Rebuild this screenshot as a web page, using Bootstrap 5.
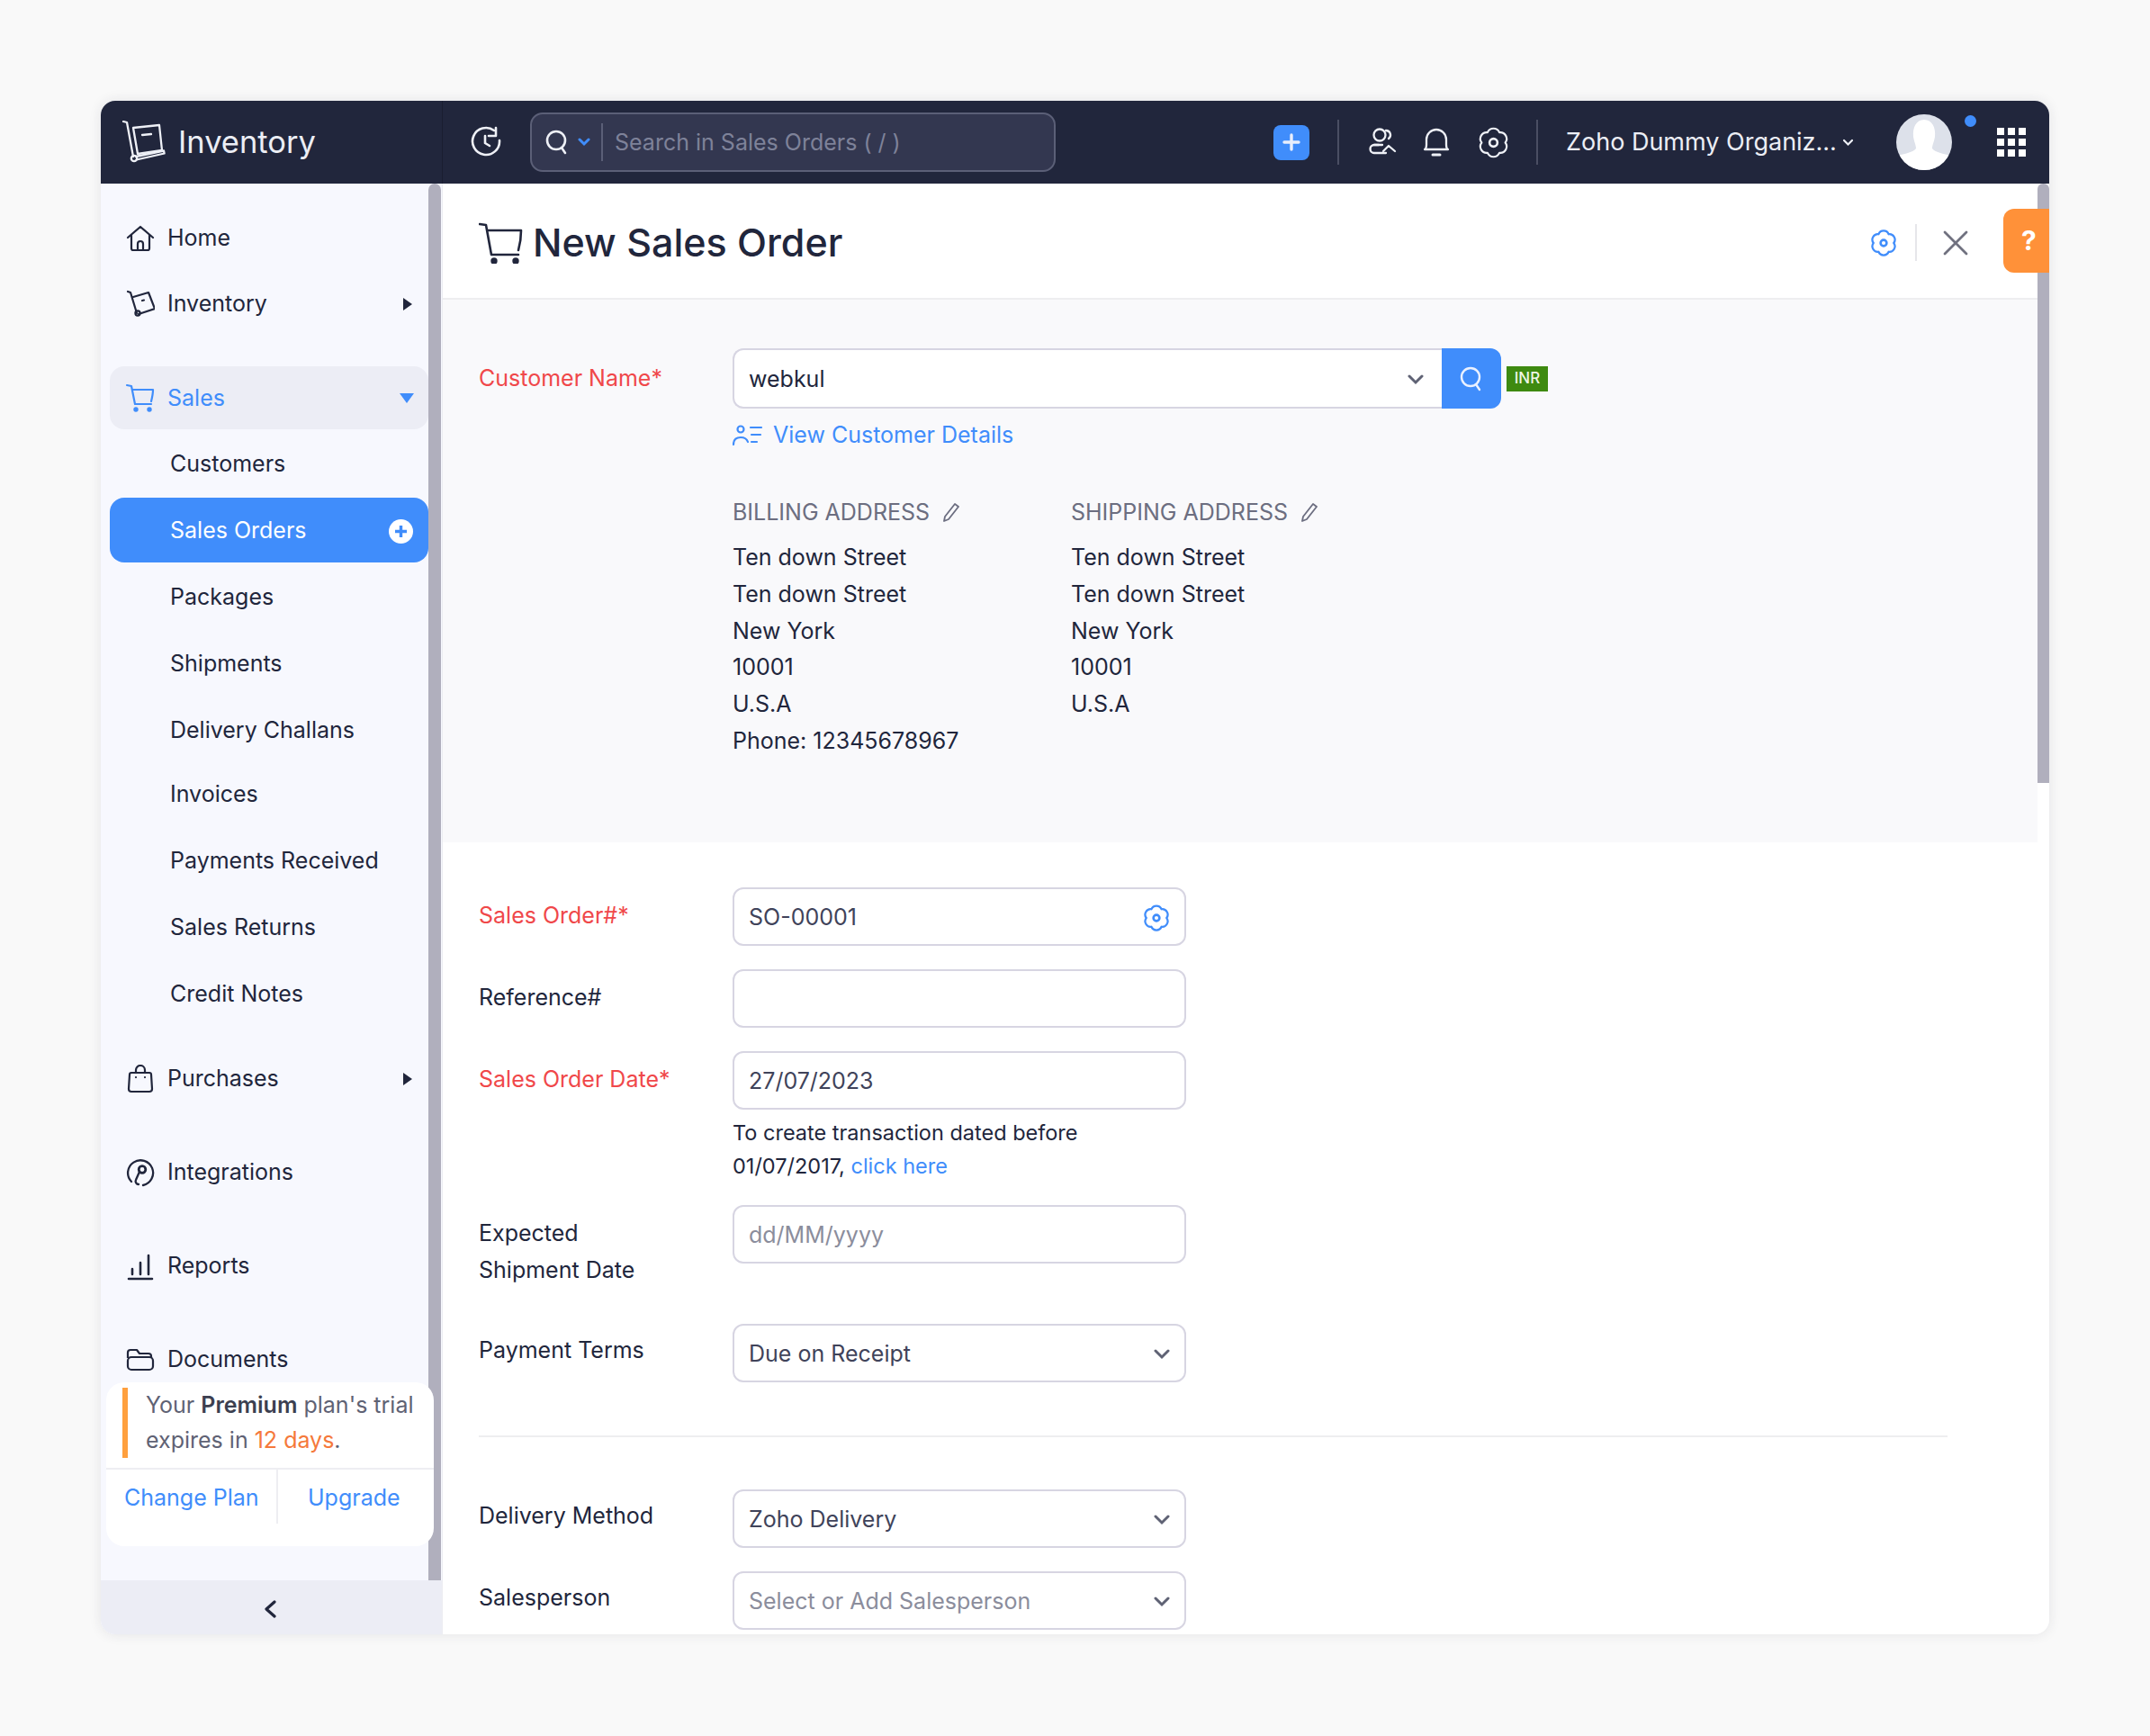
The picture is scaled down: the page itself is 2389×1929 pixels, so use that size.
<!DOCTYPE html>
<html lang="en"><head><meta charset="utf-8"><title>New Sales Order</title>
<link href="https://cdn.jsdelivr.net/npm/bootstrap@5.3.0/dist/css/bootstrap.min.css" rel="stylesheet">
<style>
html,body{height:100%}
body{background:#f9f9f9;font-family:Inter,"Liberation Sans",sans-serif;font-size:25px;color:#21263c;padding:112px 112px 113px;overflow:hidden}
svg{display:block;flex:none}
.win{height:1704px;border-radius:16px;overflow:hidden;box-shadow:0 0 14px rgba(40,40,60,.1);position:relative;background:#fff}
.topbar{height:92px;background:#21263c;color:#eceef5}
.brandcell{width:380px;height:100%;padding-left:24px;border-right:1px solid #1a1e30;font-size:34.500px;gap:14px}
.histic{margin-left:30px}
.srch{width:584px;height:66px;margin-left:31px;background:#333750;border:2px solid #5b5f77;border-radius:14px;color:#7e8299;font-size:25px;padding-left:15px}
.srch-chev{margin-left:10px}
.srch-div{width:2px;height:42px;background:#5b5f77;margin:0 13px 0 12px}
.srch-txt{padding-top:2px}
.vdiv{width:2px;height:50px;background:#4a4e63}
.plusbtn{width:40px;height:39px;background:#408dfb;border-radius:8px;margin-left:242px}
.gapl{margin-left:30px}
.gapb{margin-left:28px}
.vd1{margin:0 32px 0 31px}
.org{font-size:27px;margin:0 6px 0 31px;white-space:nowrap}
.avat{width:62px;height:62px;border-radius:50%;background:#dde1ea;overflow:hidden;margin-left:47px;position:relative}
.ping{width:13px;height:13px;border-radius:50%;background:#408dfb;margin:-48px 0 0 14px}
.grid9{display:grid;grid-template-columns:repeat(3,8px);grid-auto-rows:8px;gap:4px;margin-left:23px}
.grid9 i{background:#fff}
.bodyrow{height:1612px}
.side{width:380px;height:100%;background:#f7f8fe;position:relative;overflow:hidden;border-right:1px solid #ecedf2}
.side-bar{position:absolute;right:1px;top:0;width:14px;bottom:60px;background:#b0afbd;border-radius:7px 7px 0 0}
.menu{padding:26px 0 0 10px;width:364px}
.mi{height:70px;padding:0 18px;gap:14px;border-radius:16px;color:#21263c}
.mi .arrow{margin-left:auto}
.mi-gap{margin-bottom:34px}
.mi-inv{margin:3px 0 34px}
.mi-sales{background:#ecedf5;color:#408dfb;margin-bottom:1px}
.mi-sales span{padding-top:2px}
.mi-sales .arrow{margin-right:-2px}
.si{height:74px;padding:2px 17px 0 67px;color:#21263c}
.si-on{background:#408dfb;color:#fff;border-radius:16px;height:72px;margin:1px 0}
.si-deliv{margin-bottom:-3px}
.si-last{margin-bottom:23px}
.tri-r{width:0;height:0;border-top:7px solid transparent;border-bottom:7px solid transparent;border-left:10px solid #21263c}
.tri-d{width:0;height:0;border-left:8px solid transparent;border-right:8px solid transparent;border-top:11px solid #408dfb}
.trial{position:absolute;left:6px;width:364px;top:1332px;height:182px;background:#fff;border-radius:20px;color:#5f6274;font-size:25px;line-height:39px}
.trial-msg{padding:6px 6px 0 44px;height:95px;position:relative;white-space:nowrap}
.trial-msg::before{content:"";position:absolute;left:18px;top:6px;width:6px;height:78px;background:#ffa03e}
.trial-msg b{font-weight:600;color:#3c3f50}
.trial-msg em{font-style:normal;color:#f5793b}
.trial-act{border-top:2px solid #eeeef2;height:62px}
.trial-act a{text-decoration:none;color:#408dfb;padding-top:12px}
.act1{padding-left:20px;border-right:2px solid #eeeef2;width:191px;flex:none}
.act2{padding-left:33px;flex:1}
.collapser{position:absolute;left:0;right:0;bottom:0;height:60px;background:#ecedf5;padding:4px 4px 0 0}
.main{height:100%;overflow:hidden;position:relative}
.mainhead{height:129px;border-bottom:2px solid #eeeef0;padding:4px 0 0 40px;gap:10px;background:#fff}
.mainhead h1{font-size:43px;font-weight:500;margin:0;color:#21263c}
.headtools{margin-right:89px}
.hdiv{width:2px;height:41px;background:#e6e6ea;margin:0 28px 0 20px}
.help{position:absolute;top:28px;right:0;width:51px;height:71px;background:#ff9139;border-radius:12px 0 0 12px;color:#fff;font-weight:700;font-size:30px;z-index:2;padding-left:20px}
.vbar{position:absolute;right:0;top:0;width:13px;height:666px;background:#b0afbd;border-radius:6px 6px 0 0}
.custsec{background:#f9f9fb;height:603px;padding:54px 0 0 40px;margin-right:13px}
.lbl{width:282px;flex:none}
.lbl-req{color:#f0484a}
.lbl-cust{padding-top:12px;line-height:42px}
.ctrl{height:65px;border:2px solid #d7d5e2;border-radius:12px;background:#fff;width:504px;padding:2px 16px 0;color:#40435a;position:relative}
.ctrl-custom{width:788px;border-radius:12px 0 0 12px;border-right:0;color:#21263c;height:67px;padding-right:20px}
.srchbtn{width:66px;height:67px;background:#408dfb;border-radius:0 12px 12px 0}
.inr{background:#3e8a10;color:#eef6e6;font-size:17px;font-weight:500;width:46px;height:28px;margin-left:6px}
.bluelink{color:#408dfb;text-decoration:none}
.viewd{margin:12px 0 0 282px;gap:11px;height:36px}
.addr{margin:49px 0 0 282px}
.addrcol{width:376px;line-height:40.8px}
.addr-h{color:#6c6e80;font-size:25px;gap:14px;margin-bottom:12px;height:36px}
.formsec{padding:50px 0 0 40px;margin-right:13px}
.frow{margin-bottom:26px;line-height:41px}
.frow .lbl,.datelbl{padding-top:11px}
.frow .lbl-low{padding-top:9px}
.daterow{line-height:41px}
.hint{margin:7px 0 25px 282px;font-size:23.500px;line-height:37px}
.ph{color:#8b8d9c}
.fhr{border-top:2px solid #eeeef0;margin:59px 100px 58px 0}
.mb-none{margin-bottom:0}
.pay{margin:39px 0 0}
</style></head><body>
<div class="win">
 <div class="topbar d-flex align-items-center">
  <div class="brandcell d-flex align-items-center">
   <svg width="48" height="48" viewBox="0 0 48 48" fill="none" stroke="#eef0f6" stroke-width="2.300" stroke-linecap="round" stroke-linejoin="round"><path d="M1 1l4 1 7 38"/><path d="M12 8l29-3 3 28-27 4z"/><path d="M15 40l31-6.500 .6 3-31 7"/><circle cx="13" cy="42" r="3.200"/><path d="M22 16l10-1"/></svg>
   <span>Inventory</span>
  </div>
  <svg class="histic" width="36" height="36" viewBox="0 0 36 36" fill="none" stroke="#eef0f6" stroke-width="2.6" stroke-linecap="round" stroke-linejoin="round"><path d="M27 5a15 15 0 1 0 6 11"/><path d="M29 2v9h-8"/><path d="M17 11v8l5 3"/></svg>
  <div class="srch d-flex align-items-center">
   <svg width="26" height="30" viewBox="0 0 26 30" fill="none" stroke="#eef0f6" stroke-width="2.6" stroke-linecap="round"><circle cx="12" cy="13" r="10"/><path d="M18 21l4 6"/></svg>
   <svg class="srch-chev" width="14" height="10" viewBox="0 0 14 10" fill="none" stroke="#408dfb" stroke-width="3" stroke-linecap="round"><path d="M2 2l5 5 5-5"/></svg>
   <div class="srch-div"></div>
   <span class="srch-txt">Search in Sales Orders ( / )</span>
  </div>
  <div class="plusbtn d-flex align-items-center justify-content-center"><svg width="20" height="20" viewBox="0 0 20 20" stroke="#e8eefc" stroke-width="3.4" stroke-linecap="round"><path d="M10 2v16M2 10h16"/></svg></div>
  <div class="vdiv vd1"></div>
  <svg width="32" height="32" viewBox="0 0 32 32" fill="none" stroke="#eef0f6" stroke-width="2.300" stroke-linecap="round" stroke-linejoin="round"><circle cx="13" cy="8" r="6.500"/><path d="M20 3a5 5 0 0 1 3 9"/><path d="M12 19H7a4.500 4.500 0 0 0 0 9h13"/><path d="M7 19h9M17 26l6-6 7 6"/></svg>
  <svg class="gapb" width="32" height="32" viewBox="0 0 32 32" fill="none" stroke="#eef0f6" stroke-width="2.300" stroke-linecap="round" stroke-linejoin="round"><path d="M3 24c2-1 2-3 2-5v-6a11 11 0 0 1 22 0v6c0 2 0 4 2 5z"/><path d="M12 30h8" stroke-width="3"/></svg>
  <svg class="gapl" width="35" height="35" viewBox="0 0 32 32" fill="none" stroke="#eef0f6" stroke-width="2" stroke-linejoin="round"><path d="M28 16A6.500 6.500 0 0 0 22 5.600 6.500 6.500 0 0 0 10 5.600 6.500 6.500 0 0 0 4 16 6.500 6.500 0 0 0 10 26.400 6.500 6.500 0 0 0 22 26.400 6.500 6.500 0 0 0 28 16z"/><circle cx="16" cy="16" r="4" stroke-width="2.400"/></svg>
  <div class="vdiv gapl"></div>
  <span class="org">Zoho Dummy Organiz...</span>
  <svg width="13" height="9" viewBox="0 0 13 9" fill="none" stroke="#eef0f6" stroke-width="2.2" stroke-linecap="round"><path d="M2 2l4.500 4.500L11 2"/></svg>
  <div class="avat"><svg width="62" height="62" viewBox="0 0 62 62"><path d="M31 6c9 0 13 9 12 19-1 6-3 9-3 13 3 4 12 6 22 8v16H0V46c10-2 19-4 22-8 0-4-2-7-3-13C18 15 22 6 31 6z" fill="#fff"/></svg></div>
  <div class="ping"></div>
  <div class="grid9"><i></i><i></i><i></i><i></i><i></i><i></i><i></i><i></i><i></i></div>
 </div>
 <div class="bodyrow d-flex">
  <aside class="side flex-shrink-0">
   <div class="side-bar"></div>
   <div class="menu">
    <div class="mi d-flex align-items-center"><svg width="32" height="32" viewBox="0 0 32 32" fill="none" stroke="#21263c" stroke-width="2.2" stroke-linejoin="round" stroke-linecap="round"><path d="M2 15L16 3l14 12M6 12v15a2 2 0 0 0 2 2h16a2 2 0 0 0 2-2V12"/><path d="M13 29v-7a3 3 0 0 1 6 0v7"/></svg><span>Home</span></div>
    <div class="mi mi-inv d-flex align-items-center"><svg width="32" height="32" viewBox="0 0 32 32" fill="none" stroke="#21263c" stroke-width="2.2" stroke-linejoin="round" stroke-linecap="round"><path d="M2 2l3 1 7 23"/><path d="M8 8l17-5 7 18-18 6"/><circle cx="13" cy="26" r="2.600"/><path d="M18 12l2-.5"/></svg><span>Inventory</span><div class="tri-r arrow"></div></div>
    <div class="mi mi-sales d-flex align-items-center"><svg width="32" height="32" viewBox="0 0 32 32" fill="none" stroke="#408dfb" stroke-width="2.2" stroke-linejoin="round" stroke-linecap="round"><path d="M1 2l5 1 4 20h18"/><path d="M7 7h23c0 5-1 9-2 13"/><circle cx="11" cy="29" r="1.600" fill="#408dfb"/><circle cx="26" cy="29" r="1.600" fill="#408dfb"/></svg><span>Sales</span><div class="tri-d arrow"></div></div>
    <div class="si d-flex align-items-center">Customers</div>
    <div class="si si-on d-flex align-items-center justify-content-between"><span>Sales Orders</span><svg width="27" height="27" viewBox="0 0 27 27"><circle cx="13.500" cy="13.500" r="13.500" fill="#fff"/><path d="M13.500 7v13M7 13.500h13" stroke="#408dfb" stroke-width="3.400"/></svg></div>
    <div class="si d-flex align-items-center">Packages</div>
    <div class="si d-flex align-items-center">Shipments</div>
    <div class="si si-deliv d-flex align-items-center">Delivery Challans</div>
    <div class="si d-flex align-items-center">Invoices</div>
    <div class="si d-flex align-items-center">Payments Received</div>
    <div class="si d-flex align-items-center">Sales Returns</div>
    <div class="si si-last d-flex align-items-center">Credit Notes</div>
    <div class="mi mi-gap d-flex align-items-center"><svg width="32" height="32" viewBox="0 0 32 32" fill="none" stroke="#21263c" stroke-width="2.2" stroke-linejoin="round" stroke-linecap="round"><path d="M6 9h20a2 2 0 0 1 2 2l1 16a3 3 0 0 1-3 3H6a3 3 0 0 1-3-3l1-16a2 2 0 0 1 2-2z"/><path d="M11 9V6a5 5 0 0 1 10 0v3"/><path d="M11 14v.1M21 14v.1"/></svg><span>Purchases</span><div class="tri-r arrow"></div></div>
    <div class="mi mi-gap d-flex align-items-center"><svg width="32" height="32" viewBox="0 0 32 32" fill="none" stroke="#21263c" stroke-width="2.3" stroke-linejoin="round" stroke-linecap="round"><path d="M6 26A14 14 0 1 1 19 30"/><circle cx="18" cy="12.500" r="3.800" stroke-width="2.800"/><path d="M15 15l-4 9a3.500 3.500 0 0 0 3 5"/></svg><span>Integrations</span></div>
    <div class="mi mi-gap d-flex align-items-center"><svg width="32" height="32" viewBox="0 0 32 32" fill="none" stroke="#21263c" stroke-width="2.600" stroke-linecap="round"><path d="M3 30h26M7 25v-6M16 25V12M25 25V4"/></svg><span>Reports</span></div>
    <div class="mi mi-gap d-flex align-items-center"><svg width="32" height="32" viewBox="0 0 32 32" fill="none" stroke="#21263c" stroke-width="2.200" stroke-linejoin="round"><path d="M2 14V8a3 3 0 0 1 3-3h7l3 4h10a3 3 0 0 1 3 3v2"/><rect x="2" y="13" width="28" height="14" rx="4"/></svg><span>Documents</span></div>
   </div>
   <div class="trial">
    <div class="trial-msg">Your <b>Premium</b> plan's trial<br>expires in <em>12 days</em>.</div>
    <div class="trial-act d-flex"><a href="#" class="act1">Change Plan</a><a href="#" class="act2">Upgrade</a></div>
   </div>
   <div class="collapser d-flex align-items-center justify-content-center"><svg width="14" height="22" viewBox="0 0 14 22" fill="none" stroke="#21263c" stroke-width="3.200" stroke-linecap="round" stroke-linejoin="round"><path d="M12 3l-9 8 9 8"/></svg></div>
  </aside>
  <main class="main flex-grow-1">
   <div class="vbar"></div>
   <div class="help d-flex align-items-center">?</div>
   <div class="mainhead d-flex align-items-center">
    <svg width="50" height="46" viewBox="0 0 50 46" fill="none" stroke="#21263c" stroke-width="2.600" stroke-linejoin="round" stroke-linecap="round"><path d="M1 2l7 1 6 33h30"/><path d="M10 9h37c0 9-1 15-3 22"/><circle cx="17" cy="43" r="2.400" fill="#21263c"/><circle cx="41" cy="43" r="2.400" fill="#21263c"/></svg>
    <h1>New Sales Order</h1>
    <div class="headtools ms-auto d-flex align-items-center">
     <svg width="30" height="30" viewBox="0 0 32 32" fill="none" stroke="#408dfb" stroke-width="2.400" stroke-linejoin="round"><path d="M28 16A6.500 6.500 0 0 0 22 5.600 6.500 6.500 0 0 0 10 5.600 6.500 6.500 0 0 0 4 16 6.500 6.500 0 0 0 10 26.400 6.500 6.500 0 0 0 22 26.400 6.500 6.500 0 0 0 28 16z"/><circle cx="16" cy="16" r="3.600" stroke-width="2.800"/></svg>
     <div class="hdiv"></div>
     <svg width="30" height="28" viewBox="0 0 30 28" stroke="#70717f" stroke-width="2.800" stroke-linecap="round"><path d="M3 2l24 24M27 2L3 26"/></svg>
    </div>
   </div>
   <section class="custsec">
    <div class="d-flex">
     <div class="lbl lbl-req lbl-cust">Customer Name*</div>
     <div class="ctrl ctrl-custom d-flex align-items-center justify-content-between">webkul
      <svg width="18" height="12" viewBox="0 0 18 12" fill="none" stroke="#5f6274" stroke-width="3" stroke-linecap="round"><path d="M2 2l7 7 7-7"/></svg></div>
     <div class="srchbtn d-flex align-items-center justify-content-center"><svg width="26" height="30" viewBox="0 0 26 30" fill="none" stroke="#eaf1ff" stroke-width="2.400" stroke-linecap="round"><circle cx="12" cy="13" r="10"/><path d="M18 21l4 6"/></svg></div>
     <div class="inr d-flex align-items-center justify-content-center align-self-center">INR</div>
    </div>
    <div class="viewd d-flex align-items-center bluelink"><svg width="34" height="24" viewBox="0 0 34 24" fill="none" stroke="#408dfb" stroke-width="2.200" stroke-linecap="round"><circle cx="9" cy="5" r="3.500"/><path d="M1 22c0-5 3-8 8-8s7 2 8 5"/><path d="M20 3h12M21 11h10M21 19h6"/></svg><span>View Customer Details</span></div>
    <div class="addr d-flex">
     <div class="addrcol"><div class="addr-h d-flex align-items-center">BILLING ADDRESS <svg width="20" height="22" viewBox="0 0 20 22" fill="none" stroke="#6c6e80" stroke-width="1.800" stroke-linejoin="round"><path d="M14 2l4 3-11 14-5 2 1-5z"/></svg></div>
      Ten down Street<br>Ten down Street<br>New York<br>10001<br>U.S.A<br>Phone: 12345678967</div>
     <div class="addrcol"><div class="addr-h d-flex align-items-center">SHIPPING ADDRESS <svg width="20" height="22" viewBox="0 0 20 22" fill="none" stroke="#6c6e80" stroke-width="1.800" stroke-linejoin="round"><path d="M14 2l4 3-11 14-5 2 1-5z"/></svg></div>
      Ten down Street<br>Ten down Street<br>New York<br>10001<br>U.S.A</div>
    </div>
   </section>
   <section class="formsec">
    <div class="frow d-flex"><div class="lbl lbl-req">Sales Order#*</div><div class="ctrl d-flex align-items-center justify-content-between">SO-00001<svg width="30" height="30" viewBox="0 0 32 32" fill="none" stroke="#408dfb" stroke-width="2.400" stroke-linejoin="round"><path d="M28 16A6.500 6.500 0 0 0 22 5.600 6.500 6.500 0 0 0 10 5.600 6.500 6.500 0 0 0 4 16 6.500 6.500 0 0 0 10 26.400 6.500 6.500 0 0 0 22 26.400 6.500 6.500 0 0 0 28 16z"/><circle cx="16" cy="16" r="3.600" stroke-width="2.800"/></svg></div></div>
    <div class="frow d-flex"><div class="lbl">Reference#</div><div class="ctrl"></div></div>
    <div class="daterow d-flex"><div class="lbl lbl-req datelbl">Sales Order Date*</div><div class="ctrl d-flex align-items-center">27/07/2023</div></div>
    <div class="hint">To create transaction dated before<br>01/07/2017, <a href="#" class="bluelink">click here</a></div>
    <div class="frow mb-none d-flex"><div class="lbl">Expected<br>Shipment Date</div><div class="ctrl d-flex align-items-center ph">dd/MM/yyyy</div></div>
    <div class="frow pay d-flex"><div class="lbl lbl-low">Payment Terms</div><div class="ctrl d-flex align-items-center justify-content-between">Due on Receipt<svg width="18" height="12" viewBox="0 0 18 12" fill="none" stroke="#5f6274" stroke-width="3" stroke-linecap="round"><path d="M2 2l7 7 7-7"/></svg></div></div>
    <div class="fhr"></div>
    <div class="frow d-flex"><div class="lbl lbl-low">Delivery Method</div><div class="ctrl d-flex align-items-center justify-content-between">Zoho Delivery<svg width="18" height="12" viewBox="0 0 18 12" fill="none" stroke="#5f6274" stroke-width="3" stroke-linecap="round"><path d="M2 2l7 7 7-7"/></svg></div></div>
    <div class="frow d-flex"><div class="lbl lbl-low">Salesperson</div><div class="ctrl d-flex align-items-center justify-content-between ph">Select or Add Salesperson<svg width="18" height="12" viewBox="0 0 18 12" fill="none" stroke="#5f6274" stroke-width="3" stroke-linecap="round"><path d="M2 2l7 7 7-7"/></svg></div></div>
   </section>
  </main>
 </div>
</div>
<script src="https://cdn.jsdelivr.net/npm/bootstrap@5.3.0/dist/js/bootstrap.bundle.min.js"></script>
</body></html>
